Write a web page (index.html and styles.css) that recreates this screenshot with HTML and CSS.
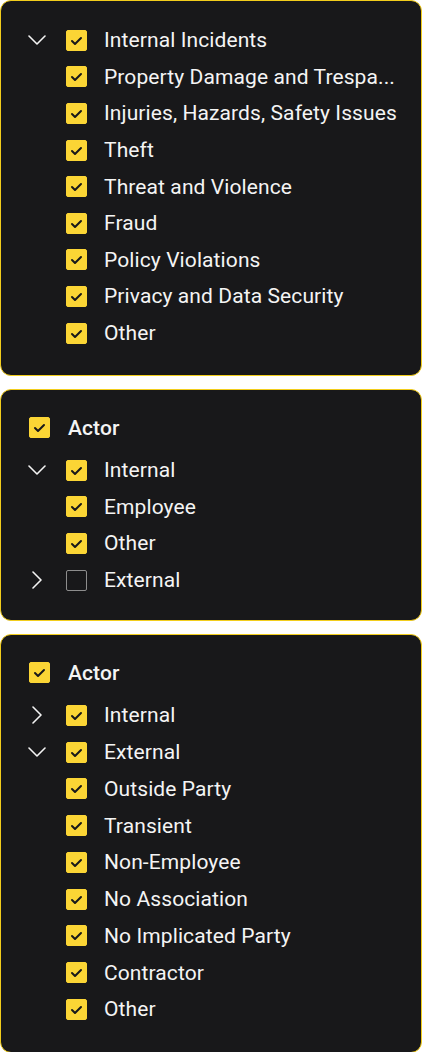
FILE: index.html
```html
<!DOCTYPE html>
<html lang="en">

<head>
    <meta charset="UTF-8">
    <meta name="viewport" content="width=device-width, initial-scale=1.0">
    <title>Filters</title>
    <link rel="stylesheet" href="styles.css">
</head>

<body>
    <div class="wrap">
        <!-- 事件类型 -->
        <div class="card">
            <div class="row">
                <span class="chev"><svg width="18" height="10" viewBox="0 0 18 10"><path d="M1 1 L9 9 L17 1" /></svg></span>
                <span class="box on"><svg width="21" height="21" viewBox="0 0 21 21"><path d="M6 11 L9 14 L15 8" /></svg></span>
                <span class="label">Internal Incidents</span>
            </div>
            <div class="row">
                <span class="chev"></span>
                <span class="box on"><svg width="21" height="21" viewBox="0 0 21 21"><path d="M6 11 L9 14 L15 8" /></svg></span>
                <span class="label">Property Damage and Trespa...</span>
            </div>
            <div class="row">
                <span class="chev"></span>
                <span class="box on"><svg width="21" height="21" viewBox="0 0 21 21"><path d="M6 11 L9 14 L15 8" /></svg></span>
                <span class="label">Injuries, Hazards, Safety Issues</span>
            </div>
            <div class="row">
                <span class="chev"></span>
                <span class="box on"><svg width="21" height="21" viewBox="0 0 21 21"><path d="M6 11 L9 14 L15 8" /></svg></span>
                <span class="label">Theft</span>
            </div>
            <div class="row">
                <span class="chev"></span>
                <span class="box on"><svg width="21" height="21" viewBox="0 0 21 21"><path d="M6 11 L9 14 L15 8" /></svg></span>
                <span class="label">Threat and Violence</span>
            </div>
            <div class="row">
                <span class="chev"></span>
                <span class="box on"><svg width="21" height="21" viewBox="0 0 21 21"><path d="M6 11 L9 14 L15 8" /></svg></span>
                <span class="label">Fraud</span>
            </div>
            <div class="row">
                <span class="chev"></span>
                <span class="box on"><svg width="21" height="21" viewBox="0 0 21 21"><path d="M6 11 L9 14 L15 8" /></svg></span>
                <span class="label">Policy Violations</span>
            </div>
            <div class="row">
                <span class="chev"></span>
                <span class="box on"><svg width="21" height="21" viewBox="0 0 21 21"><path d="M6 11 L9 14 L15 8" /></svg></span>
                <span class="label">Privacy and Data Security</span>
            </div>
            <div class="row">
                <span class="chev"></span>
                <span class="box on"><svg width="21" height="21" viewBox="0 0 21 21"><path d="M6 11 L9 14 L15 8" /></svg></span>
                <span class="label">Other</span>
            </div>
        </div>

        <!-- Actor: internal 展开 -->
        <div class="card card_actor">
            <div class="head">
                <span class="box on"><svg width="21" height="21" viewBox="0 0 21 21"><path d="M6 11 L9 14 L15 8" /></svg></span>
                <span class="label">Actor</span>
            </div>
            <div class="row">
                <span class="chev"><svg width="18" height="10" viewBox="0 0 18 10"><path d="M1 1 L9 9 L17 1" /></svg></span>
                <span class="box on"><svg width="21" height="21" viewBox="0 0 21 21"><path d="M6 11 L9 14 L15 8" /></svg></span>
                <span class="label">Internal</span>
            </div>
            <div class="row">
                <span class="chev"></span>
                <span class="box on"><svg width="21" height="21" viewBox="0 0 21 21"><path d="M6 11 L9 14 L15 8" /></svg></span>
                <span class="label">Employee</span>
            </div>
            <div class="row">
                <span class="chev"></span>
                <span class="box on"><svg width="21" height="21" viewBox="0 0 21 21"><path d="M6 11 L9 14 L15 8" /></svg></span>
                <span class="label">Other</span>
            </div>
            <div class="row">
                <span class="chev"><svg width="10" height="18" viewBox="0 0 10 18"><path d="M1 1 L9 9 L1 17" /></svg></span>
                <span class="box"></span>
                <span class="label">External</span>
            </div>
        </div>

        <!-- Actor: external 展开 -->
        <div class="card card_actor">
            <div class="head">
                <span class="box on"><svg width="21" height="21" viewBox="0 0 21 21"><path d="M6 11 L9 14 L15 8" /></svg></span>
                <span class="label">Actor</span>
            </div>
            <div class="row">
                <span class="chev"><svg width="10" height="18" viewBox="0 0 10 18"><path d="M1 1 L9 9 L1 17" /></svg></span>
                <span class="box on"><svg width="21" height="21" viewBox="0 0 21 21"><path d="M6 11 L9 14 L15 8" /></svg></span>
                <span class="label">Internal</span>
            </div>
            <div class="row">
                <span class="chev"><svg width="18" height="10" viewBox="0 0 18 10"><path d="M1 1 L9 9 L17 1" /></svg></span>
                <span class="box on"><svg width="21" height="21" viewBox="0 0 21 21"><path d="M6 11 L9 14 L15 8" /></svg></span>
                <span class="label">External</span>
            </div>
            <div class="row">
                <span class="chev"></span>
                <span class="box on"><svg width="21" height="21" viewBox="0 0 21 21"><path d="M6 11 L9 14 L15 8" /></svg></span>
                <span class="label">Outside Party</span>
            </div>
            <div class="row">
                <span class="chev"></span>
                <span class="box on"><svg width="21" height="21" viewBox="0 0 21 21"><path d="M6 11 L9 14 L15 8" /></svg></span>
                <span class="label">Transient</span>
            </div>
            <div class="row">
                <span class="chev"></span>
                <span class="box on"><svg width="21" height="21" viewBox="0 0 21 21"><path d="M6 11 L9 14 L15 8" /></svg></span>
                <span class="label">Non-Employee</span>
            </div>
            <div class="row">
                <span class="chev"></span>
                <span class="box on"><svg width="21" height="21" viewBox="0 0 21 21"><path d="M6 11 L9 14 L15 8" /></svg></span>
                <span class="label">No Association</span>
            </div>
            <div class="row">
                <span class="chev"></span>
                <span class="box on"><svg width="21" height="21" viewBox="0 0 21 21"><path d="M6 11 L9 14 L15 8" /></svg></span>
                <span class="label">No Implicated Party</span>
            </div>
            <div class="row">
                <span class="chev"></span>
                <span class="box on"><svg width="21" height="21" viewBox="0 0 21 21"><path d="M6 11 L9 14 L15 8" /></svg></span>
                <span class="label">Contractor</span>
            </div>
            <div class="row">
                <span class="chev"></span>
                <span class="box on"><svg width="21" height="21" viewBox="0 0 21 21"><path d="M6 11 L9 14 L15 8" /></svg></span>
                <span class="label">Other</span>
            </div>
        </div>
    </div>
</body>

</html>
```

FILE: styles.css
```css
* {
    margin: 0;
    padding: 0;
    box-sizing: border-box;
}

body {
    background: #ffffff;
    font-family: Roboto, "Liberation Sans", sans-serif;
    color: #f4f4f4;
}

.wrap {
    width: 422px;
    display: flex;
    flex-direction: column;
    gap: 13px;
}

.card {
    background: #18181a;
    border: 1.5px solid #f2cd1c;
    border-radius: 11px;
    padding: 21px 20px 24px 27px;
}

.card_actor {
    padding-top: 19px;
    padding-bottom: 22px;
}

.card_actor:last-child {
    padding-bottom: 24px;
}

.card_actor:last-child .row {
    height: 36.75px;
}

.row {
    height: 36.6px;
    display: flex;
    align-items: center;
}

.head {
    height: 36.6px;
    display: flex;
    align-items: center;
    margin-bottom: 6px;
}

.chev {
    width: 18px;
    height: 18px;
    margin-right: 20px;
    display: flex;
    align-items: center;
    justify-content: center;
}

.chev svg path {
    fill: none;
    stroke: #f4f4f4;
    stroke-width: 1.6;
    stroke-linecap: round;
    stroke-linejoin: round;
}

.box {
    width: 21px;
    height: 21px;
    border: 1.5px solid #8d8d8d;
    border-radius: 2px;
    margin-right: 17px;
    flex-shrink: 0;
    display: flex;
    align-items: center;
    justify-content: center;
}

.box.on {
    background: #fbd535;
    border-color: #fbd535;
}

.box svg {
    flex-shrink: 0;
}

.box svg path {
    fill: none;
    stroke: #18181a;
    stroke-width: 2;
    stroke-linecap: round;
    stroke-linejoin: round;
}

.label {
    font-size: 21px;
    white-space: nowrap;
    letter-spacing: 0.1px;
}

.head .box {
    margin-left: 1px;
    margin-right: 18px;
}

.head .label {
    font-weight: 500;
}
```
